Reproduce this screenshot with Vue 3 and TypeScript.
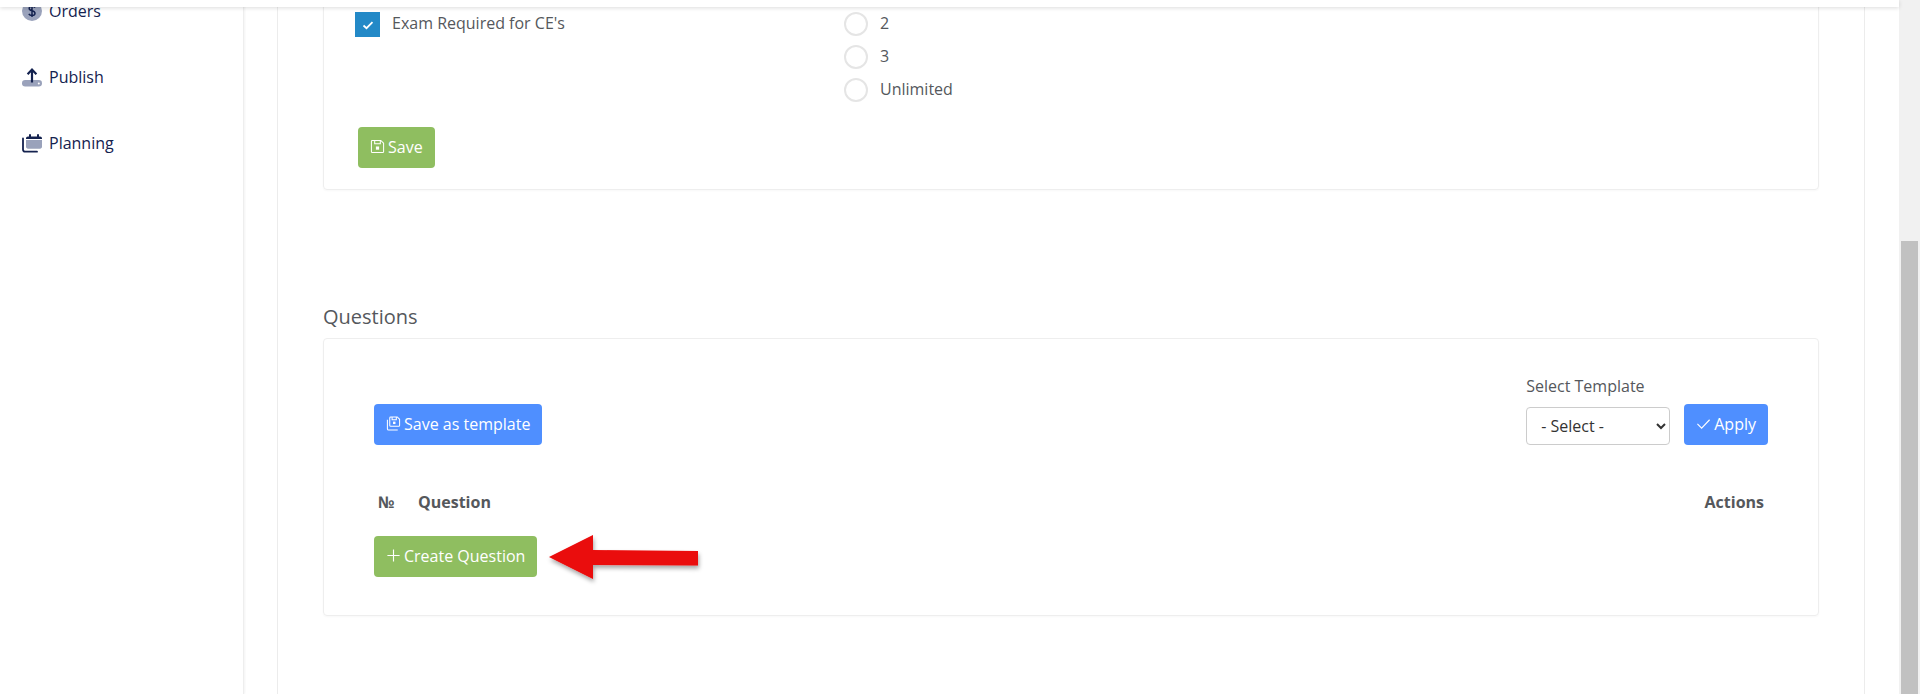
<script setup lang="ts">
const retakeOptions = ['2', '3', 'Unlimited']
</script>

<template>
  <div class="page">
    <div class="topbar"></div>

    <aside class="sidebar">
      <nav class="nav">
        <a class="nav-item">
          <svg class="nav-icon" viewBox="0 0 20 20">
            <circle cx="10" cy="10" r="10" fill="#9aa2bb" />
            <path d="M13 6.600C12.400 5.600 11.300 5.200 10 5.200 8.400 5.200 7.200 6 7.200 7.400c0 3 5.800 1.600 5.800 4.900 0 1.400-1.300 2.300-3 2.300-1.500 0-2.600-.6-3.200-1.700M10 3.800v12.200" fill="none" stroke="#14224f" stroke-width="1.500" />
          </svg>
          <span>Orders</span>
        </a>
        <a class="nav-item">
          <svg class="nav-icon" viewBox="0 0 20 20">
            <rect x="0" y="13" width="20" height="6.500" rx="3.200" fill="#9aa2bb" />
            <circle cx="16.800" cy="16.400" r="1" fill="#fff" />
            <path d="M10 15.500V3M5.600 7.200 10 2.600l4.400 4.600" fill="none" stroke="#14224f" stroke-width="2.200" />
          </svg>
          <span>Publish</span>
        </a>
        <a class="nav-item">
          <svg class="nav-icon" viewBox="0 0 20 20">
            <path d="M1 5.500v11c0 1.300 1 2.200 2.200 2.200H15" fill="none" stroke="#14224f" stroke-width="1.800" stroke-linecap="round" />
            <path d="M4 5.500c0-1.200.8-2 2-2h12c1.200 0 2 .8 2 2V6H4z" fill="#14224f" />
            <rect x="7" y="1" width="2" height="4" rx="1" fill="#14224f" />
            <rect x="15" y="1" width="2" height="4" rx="1" fill="#14224f" />
            <path d="M4 7h16v6.500c0 1.300-.8 2.200-2 2.200H6c-1.200 0-2-.9-2-2.200z" fill="#9aa2bb" />
          </svg>
          <span>Planning</span>
        </a>
      </nav>
    </aside>

    <main class="main">
      <div class="panel">
        <section class="card settings-card">
          <div class="settings-grid">
            <label class="check-row">
              <span class="checkbox">
                <svg viewBox="0 0 12 12" width="12" height="12">
                  <path d="M1.500 6.500 4.500 9.200 10.500 3.200" fill="none" stroke="#fff" stroke-width="1.800" />
                </svg>
              </span>
              <span class="check-label">Exam Required for CE's</span>
            </label>
            <div class="radio-list">
              <label v-for="option in retakeOptions" :key="option" class="radio-row">
                <span class="radio"></span>
                <span class="radio-label">{{ option }}</span>
              </label>
            </div>
          </div>
          <button class="btn btn-green save-btn">
            <svg class="btn-icon" viewBox="0 0 16 16">
              <path d="M2.500 1.500h9l3 3v9a1 1 0 0 1-1 1h-11a1 1 0 0 1-1-1v-11a1 1 0 0 1 1-1z" fill="none" stroke="currentColor" stroke-width="1.100" />
              <path d="M5 1.500v3.500h6V1.500" fill="none" stroke="currentColor" stroke-width="1.100" />
              <rect x="6.300" y="8" width="3.400" height="3.400" fill="currentColor" />
            </svg>
            Save
          </button>
        </section>

        <h2 class="section-title">Questions</h2>

        <section class="card questions-card">
          <div class="toolbar">
            <button class="btn btn-blue">
              <svg class="btn-icon" viewBox="0 0 16 16">
                <path d="M5 1h7l2.500 2.500V10a1 1 0 0 1-1 1H5a1 1 0 0 1-1-1V2a1 1 0 0 1 1-1z" fill="none" stroke="currentColor" stroke-width="1.100" />
                <path d="M6.500 1v3h4.500V1" fill="none" stroke="currentColor" stroke-width="1.100" />
                <rect x="7.500" y="6" width="2.600" height="2.600" fill="currentColor" />
                <path d="M1.500 4v9.500a1.500 1.500 0 0 0 1.500 1.500h9.500" fill="none" stroke="currentColor" stroke-width="1.100" />
              </svg>
              Save as template
            </button>
            <div class="template-picker">
              <div class="picker-label">Select Template</div>
              <div class="picker-row">
                <select class="select">
                  <option>- Select -</option>
                </select>
                <button class="btn btn-blue">
                  <svg class="btn-icon" viewBox="0 0 16 16">
                    <path d="M1.500 8.500 6 13 14.500 4" fill="none" stroke="currentColor" stroke-width="1.200" />
                  </svg>
                  Apply
                </button>
              </div>
            </div>
          </div>

          <div class="table-head">
            <span class="col-num">№</span>
            <span class="col-question">Question</span>
            <span class="col-actions">Actions</span>
          </div>

          <button class="btn btn-green">
            <svg class="btn-icon" viewBox="0 0 16 16">
              <path d="M8 1.500v13M1.500 8h13" fill="none" stroke="currentColor" stroke-width="1.200" />
            </svg>
            Create Question
          </button>
        </section>
      </div>
    </main>

    <div class="scrollbar">
      <div class="scrollbar-thumb"></div>
    </div>

    <!-- annotation drawn over the screenshot -->
    <svg class="arrow" viewBox="0 0 156 52" width="156" height="52">
      <defs>
        <filter id="arrow-shadow" x="-10%" y="-20%" width="120%" height="150%">
          <feDropShadow dx="1" dy="3" stdDeviation="2" flood-color="#000" flood-opacity="0.35" />
        </filter>
      </defs>
      <path d="M0 22 44 0V15L149 16V30.500L44 30V44z" fill="#ea0808" filter="url(#arrow-shadow)" />
    </svg>
  </div>
</template>

<style scoped>
.page {
  position: relative;
  display: flex;
  width: 1920px;
  height: 694px;
  overflow: hidden;
  background: #fff;
  font-family: 'Open Sans', sans-serif;
  font-size: 16px;
  color: #55585c;
}

.topbar {
  position: absolute;
  top: 0;
  left: 0;
  width: 1899px;
  height: 7px;
  background: #fff;
  box-shadow: 0 1px 4px rgba(0, 0, 0, 0.14);
  z-index: 2;
}

.sidebar {
  flex: none;
  width: 243px;
  border-right: 1px solid #eee;
  box-shadow: 1px 0 2px rgba(0, 0, 0, 0.05);
}

.nav {
  display: flex;
  flex-direction: column;
  gap: 40px;
  margin-top: -2px;
  padding-left: 22px;
}

.nav-item {
  display: flex;
  align-items: center;
  gap: 7px;
  height: 26px;
  color: #14224f;
}

.nav-icon {
  flex: none;
  width: 20px;
  height: 20px;
}

.main {
  flex: none;
  width: 1655px;
  padding: 0 34px 0 33px;
  box-sizing: border-box;
}

.panel {
  display: flow-root;
  height: 100%;
  padding: 0 45px;
  border-left: 1px solid #ececec;
  border-right: 1px solid #ececec;
  box-sizing: border-box;
}

.card {
  border: 1px solid #eee;
  border-radius: 4px;
  box-shadow: 0 1px 2px rgba(0, 0, 0, 0.03);
}

.settings-card {
  margin-top: -40px;
  padding: 51px 0 21px 31px;
}

.settings-grid {
  display: grid;
  grid-template-columns: 489px 1fr;
}

.check-row {
  display: flex;
  align-items: flex-start;
  gap: 12px;
  line-height: 22px;
}

.checkbox {
  display: flex;
  align-items: center;
  justify-content: center;
  width: 25px;
  height: 25px;
  background: #2389c7;
}

.radio-list {
  display: flex;
  flex-direction: column;
  gap: 9px;
}

.radio-row {
  display: flex;
  align-items: center;
  gap: 12px;
  height: 24px;
}

.radio-label {
  line-height: 22px;
  margin-bottom: 2px;
}

.radio {
  width: 24px;
  height: 24px;
  border: 2px solid #e5e5e5;
  border-radius: 50%;
  box-sizing: border-box;
}

.btn {
  display: inline-flex;
  align-items: center;
  gap: 3px;
  height: 41px;
  padding: 0 12px 2px;
  border: none;
  border-radius: 4px;
  color: #fff;
  font-family: inherit;
  font-size: 16px;
}

.btn-icon {
  flex: none;
  width: 15px;
  height: 15px;
}

.btn-green {
  background: #8fbe60;
}

.btn-blue {
  background: #4f8fff;
}

.save-btn {
  margin: 25px 0 0 3px;
}

.section-title {
  margin: 115px 0 9px;
  font-size: 20px;
  font-weight: 500;
  line-height: 24px;
  color: #55585c;
}

.questions-card {
  padding: 37px 50px 38px;
}

.toolbar {
  display: flex;
  align-items: flex-end;
  justify-content: space-between;
}

.picker-label {
  margin-bottom: 8px;
  line-height: 20px;
}

.picker-row {
  display: flex;
  align-items: flex-end;
  gap: 14px;
}

.select {
  width: 144px;
  height: 38px;
  padding: 0 10px;
  border: 1px solid #ccc;
  border-radius: 4px;
  background: #fff;
  color: #333;
  font-family: inherit;
  font-size: 16px;
}

.table-head {
  display: flex;
  align-items: center;
  height: 30px;
  margin: 42px 0 19px;
  padding: 0 4px;
  font-weight: 700;
}

.col-num {
  width: 40px;
}

.col-question {
  flex: 1;
}

.scrollbar {
  flex: none;
  width: 21px;
  padding: 241px 2px 0;
  background: #f1f1f1;
  box-sizing: border-box;
}

.scrollbar-thumb {
  height: 100%;
  background: #c1c1c1;
}
</style>

<style>
.arrow {
  position: absolute;
  left: 549px;
  top: 535px;
  overflow: visible;
  z-index: 1;
}
</style>
